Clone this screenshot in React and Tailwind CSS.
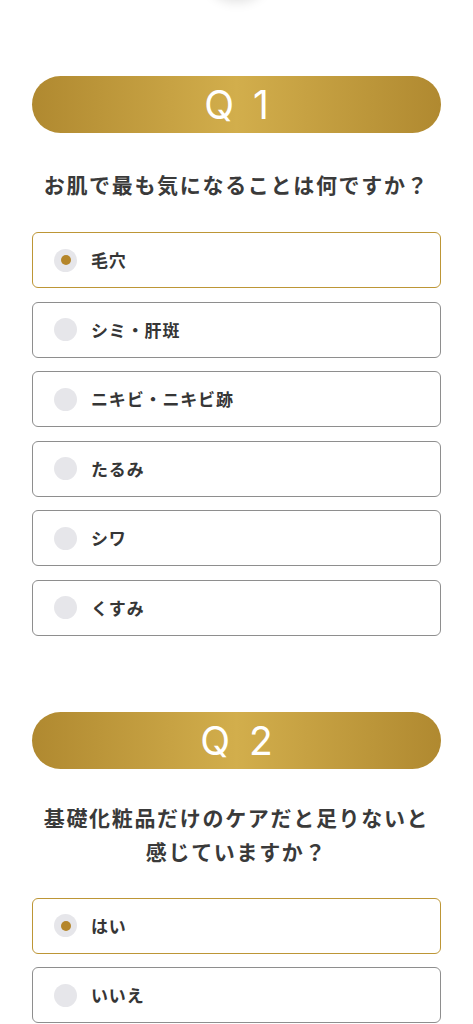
import React, { useState } from "react";

const questions = [
  {
    id: 1,
    title: ["お肌で最も気になることは何ですか？"],
    options: ["毛穴", "シミ・肝斑", "ニキビ・ニキビ跡", "たるみ", "シワ", "くすみ"],
  },
  {
    id: 2,
    title: ["基礎化粧品だけのケアだと足りないと", "感じていますか？"],
    options: ["はい", "いいえ"],
  },
];

function Option({ label, checked, onSelect }) {
  return (
    <div
      onClick={onSelect}
      className={
        "flex h-[56px] w-full cursor-pointer items-center gap-[14px] rounded-[6px] border bg-white pl-[21px] " +
        (checked ? "border-[#bd9636]" : "border-[#8e8e8e]")
      }
    >
      <span className="flex h-[23px] w-[23px] shrink-0 items-center justify-center rounded-full bg-[#e6e6ea]">
        {checked && <span className="h-[10px] w-[10px] rounded-full bg-[#b5862a]" />}
      </span>
      <span className="text-[17px] font-bold tracking-[0.05em] text-[#363636]">{label}</span>
    </div>
  );
}

export default function App() {
  const [answers, setAnswers] = useState({ 1: 0, 2: 0 });

  return (
    <div
      className="relative min-h-[1024px] overflow-hidden bg-white"
      style={{ fontFamily: '"Noto Sans CJK JP", "Noto Sans", sans-serif' }}
    >
      <div className="absolute left-[205px] top-[-60px] h-[60px] w-[64px] rounded-full bg-white shadow-[0_2px_12px_rgba(0,0,0,0.12)]" />
      <div className="px-[32px] pt-[76px]">
        {questions.map((q, qi) => (
          <section key={q.id} className={qi > 0 ? "mt-[76px]" : ""}>
            <div
              className="flex h-[57px] items-center justify-center gap-[19px] rounded-full bg-[linear-gradient(90deg,#b08930_0%,#d2ae4c_50%,#b08930_100%)] text-[39px] leading-none text-white"
              style={{ fontFamily: 'Inter, "Noto Sans", sans-serif' }}
            >
              <span>Q</span>
              <span>{q.id}</span>
            </div>
            <h2
              className={
                "text-center text-[21px] font-bold leading-[34px] tracking-[0.08em] text-[#3a3a3a] " +
                (qi > 0 ? "mt-[31px]" : "mt-[34px]")
              }
            >
              {q.title.map((line) => (
                <div key={line}>{line}</div>
              ))}
            </h2>
            <div className={"flex flex-col gap-[13.5px] " + (qi > 0 ? "mt-[30px]" : "mt-[31px]")}>
              {q.options.map((opt, i) => (
                <Option
                  key={opt}
                  label={opt}
                  checked={answers[q.id] === i}
                  onSelect={() => setAnswers({ ...answers, [q.id]: i })}
                />
              ))}
            </div>
          </section>
        ))}
      </div>
    </div>
  );
}
